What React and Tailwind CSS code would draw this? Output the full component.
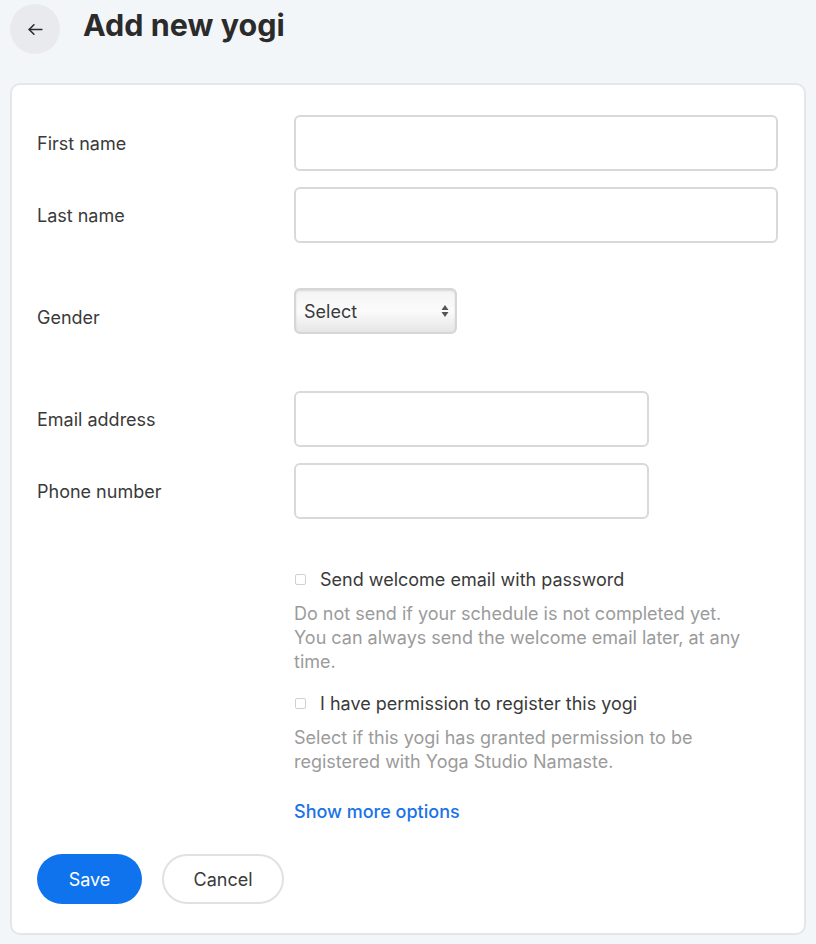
import React from 'react';

const Row = ({ label, children, labelClass = '' }) => (
    <div className="flex items-center">
        <div className={`w-[257px] shrink-0 text-[18px] text-[#3a3a3a] ${labelClass}`}>{label}</div>
        {children}
    </div>
);

const TextInput = ({ w }) => (
    <input type="text" className={`${w} h-[56px] rounded-[6px] border-2 border-[#d9d9d9] bg-white px-3 text-[18px] outline-none`} />
);

const CheckRow = ({ label, help }) => (
    <div className="pl-[257px]">
        <label className="flex items-center gap-[14px] text-[18px] text-[#3a3a3a]">
            <span className="ml-[1px] w-[11px] h-[11px] rounded-[2px] border border-[#d0d0d0] bg-white" />
            {label}
        </label>
        <p className="mt-[9px] w-[455px] text-[18px] leading-[24px] text-[#9b9b9b]">{help}</p>
    </div>
);

export default function App() {
    return (
        <div className="min-h-[944px] bg-[#f3f6f9] px-[10px] pt-[4px] pb-[9px]" style={{ fontFamily: 'Inter, "Noto Sans", sans-serif' }}>
            <div className="flex items-center gap-[23px]">
                <button className="w-[50px] h-[50px] rounded-full bg-[#e8eaed] flex items-center justify-center">
                    <svg width="19" height="19" viewBox="0 0 24 24" fill="none" stroke="#2b2b2b" strokeWidth="2" strokeLinecap="round" strokeLinejoin="round">
                        <path d="M20 12H4" />
                        <path d="M10 6l-6 6 6 6" />
                    </svg>
                </button>
                <h1 className="text-[30.5px] font-bold text-[#2b2b2b] leading-none -mt-[8px]">Add new yogi</h1>
            </div>

            <div className="mt-[29px] rounded-[10px] border-2 border-[#e4e7e9] bg-white pl-[25px] pr-[24px] pt-[30px] pb-[29px]">
                <div className="flex flex-col gap-[16px]">
                    <Row label="First name"><TextInput w="w-[484px]" /></Row>
                    <Row label="Last name"><TextInput w="w-[484px]" /></Row>
                </div>

                <div className="mt-[45px]">
                    <Row label="Gender" labelClass="pt-[12px]">
                        <div className="w-[163px] h-[46px] rounded-[6px] border-2 border-[#d6d6d6] bg-gradient-to-b from-[#f4f4f4] via-[#fbfbfb] to-[#e6e6e6] shadow-[inset_0_1px_2px_rgba(0,0,0,0.12)] flex items-center justify-between pl-[8px] pr-[6px]">
                            <span className="text-[18px] text-[#3a3a3a]">Select</span>
                            <svg width="8" height="14" viewBox="0 0 8 14" fill="#555">
                                <path d="M4 1L7.5 6H0.5Z" />
                                <path d="M4 13L7.5 8H0.5Z" />
                            </svg>
                        </div>
                    </Row>
                </div>

                <div className="mt-[57px] flex flex-col gap-[16px]">
                    <Row label="Email address"><TextInput w="w-[355px]" /></Row>
                    <Row label="Phone number"><TextInput w="w-[355px]" /></Row>
                </div>

                <div className="mt-[47px] flex flex-col gap-[16px]">
                    <CheckRow
                        label="Send welcome email with password"
                        help="Do not send if your schedule is not completed yet. You can always send the welcome email later, at any time."
                    />
                    <CheckRow
                        label="I have permission to register this yogi"
                        help="Select if this yogi has granted permission to be registered with Yoga Studio Namaste."
                    />
                </div>

                <div className="pl-[257px] mt-[24px]">
                    <a className="text-[18px] text-[#1a73e8] font-medium cursor-pointer">Show more options</a>
                </div>

                <div className="mt-[29px] flex items-center gap-[20px]">
                    <button className="w-[105px] h-[50px] rounded-full bg-[#0f73ee] text-white text-[18px]">Save</button>
                    <button className="w-[122px] h-[50px] rounded-full border-2 border-[#dfe2e3] bg-white text-[#3a3a3a] text-[18px]">Cancel</button>
                </div>
            </div>
        </div>
    );
}
